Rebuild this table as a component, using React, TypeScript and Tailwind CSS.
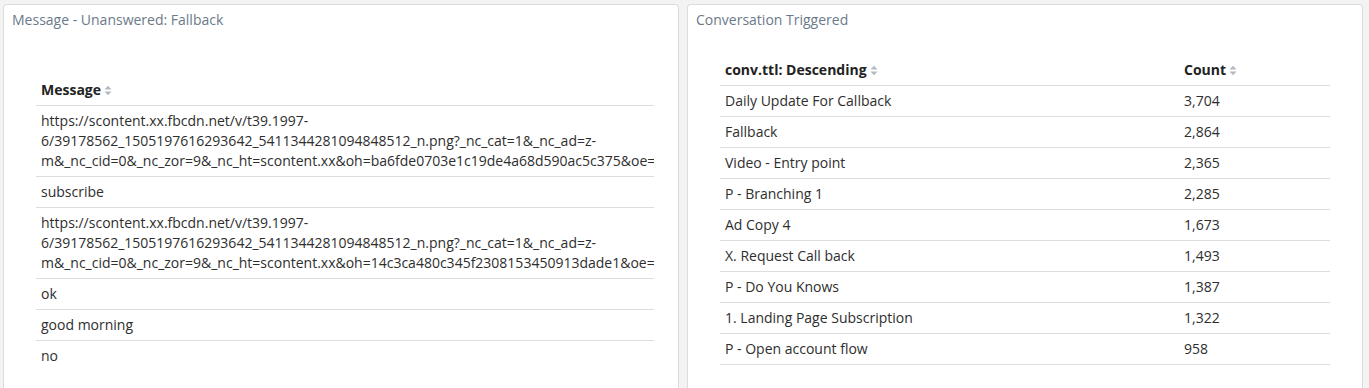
import React from 'react';

const font = { fontFamily: '"Open Sans", "Liberation Sans", sans-serif' };

const SortIcon = () => (
  <svg width="8" height="11" viewBox="0 0 8 11" className="ml-[3px] inline-block">
    <path d="M0.5 4.5 L4 0.8 L7.5 4.5 Z" fill="#b4bac1" />
    <path d="M0.5 6.5 L4 10.2 L7.5 6.5 Z" fill="#b4bac1" />
  </svg>
);

const urlA = [
  'https://scontent.xx.fbcdn.net/v/t39.1997-',
  '6/39178562_1505197616293642_5411344281094848512_n.png?_nc_cat=1&_nc_ad=z-',
  'm&_nc_cid=0&_nc_zor=9&_nc_ht=scontent.xx&oh=ba6fde0703e1c19de4a68d590ac5c375&oe=',
];
const urlB = [
  'https://scontent.xx.fbcdn.net/v/t39.1997-',
  '6/39178562_1505197616293642_5411344281094848512_n.png?_nc_cat=1&_nc_ad=z-',
  'm&_nc_cid=0&_nc_zor=9&_nc_ht=scontent.xx&oh=14c3ca480c345f2308153450913dade1&oe=',
];

const messages: string[][] = [urlA, ['subscribe'], urlB, ['ok'], ['good morning'], ['no']];

const conversations: [string, string][] = [
  ['Daily Update For Callback', '3,704'],
  ['Fallback', '2,864'],
  ['Video - Entry point', '2,365'],
  ['P - Branching 1', '2,285'],
  ['Ad Copy 4', '1,673'],
  ['X. Request Call back', '1,493'],
  ['P - Do You Knows', '1,387'],
  ['1. Landing Page Subscription', '1,322'],
  ['P - Open account flow', '958'],
];

const Panel: React.FC<{ title: string; children: React.ReactNode }> = ({ title, children }) => (
  <div className="w-[676px] h-[384px] bg-white border border-b-0 border-[#dcdcdc] rounded-t-[4px] overflow-hidden">
    <div className="pl-[8px] pt-[5px] text-[14px] leading-[20px] text-[#6b7a89]">{title}</div>
    {children}
  </div>
);

export default function App() {
  return (
    <div className="w-[1369px] h-[388px] bg-[#f3f3f3] overflow-hidden flex flex-col text-[#2e2e2e]" style={font}>
      <div className="flex-1 flex gap-[8px] pl-[3px] pt-[4px]">
        <Panel title="Message - Unanswered: Fallback">
          {/* Message table */}
          <div className="ml-[32px] mt-[45px] w-[618px] overflow-hidden text-[14px] leading-[20px]">
            <div className="px-[5px] py-[5px] font-bold text-[#222] flex items-center">
              Message
              <SortIcon />
            </div>
            {messages.map((lines, i) => (
              <div key={i} className="border-t border-[#dddddd] px-[5px] py-[5px] whitespace-nowrap">
                {lines.map((l, j) => (
                  <div key={j}>{l}</div>
                ))}
              </div>
            ))}
          </div>
        </Panel>

        <Panel title="Conversation Triggered">
          {/* Conversation table */}
          <div className="ml-[32px] mt-[25px] w-[610px] text-[14px] leading-[20px]">
            <div className="grid grid-cols-[459px_1fr] font-bold text-[#222]">
              <div className="px-[5px] py-[5px] flex items-center">
                conv.ttl: Descending
                <SortIcon />
              </div>
              <div className="px-[5px] py-[5px] flex items-center">
                Count
                <SortIcon />
              </div>
            </div>
            {conversations.map(([name, count]) => (
              <div key={name} className="grid grid-cols-[459px_1fr] border-t border-[#dddddd]">
                <div className="px-[5px] py-[5px]">{name}</div>
                <div className="px-[5px] py-[5px]">{count}</div>
              </div>
            ))}
            <div className="border-t border-[#dddddd]" />
          </div>
        </Panel>
      </div>
      <div className="h-[2px] bg-[#2a2424]" />
    </div>
  );
}
